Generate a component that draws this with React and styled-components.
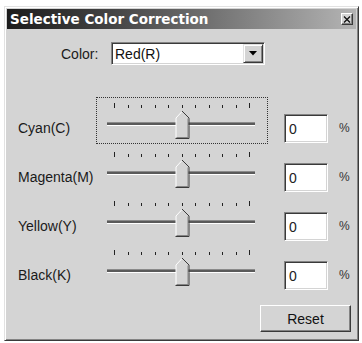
import styled, { createGlobalStyle } from 'styled-components';

const GlobalStyle = createGlobalStyle`
  body {
    margin: 0;
    background: #ffffff;
    font-family: "Liberation Sans", Arial, sans-serif;
  }
`;

const Page = styled.div`
  padding: 6px 0 0 4px;
`;

const Window = styled.div`
  width: 355px;
  height: 335px;
  box-sizing: border-box;
  background: #d4d4d4;
  border: 1px solid;
  border-color: #e2e2e2 #3a3a3a #3a3a3a #e2e2e2;
  box-shadow: inset 1px 1px 0 #ffffff, inset -1px -1px 0 #848484;
  padding: 2px;
  display: flex;
  flex-direction: column;
`;

const TitleBar = styled.div`
  height: 20px;
  display: flex;
  align-items: center;
  padding: 0 3px 0 3px;
  background: linear-gradient(to right, #1c1c1c 0%, #444444 30%, #b4b4b4 100%);
`;

const TitleText = styled.span`
  flex: 1;
  color: #ffffff;
  font-family: "DejaVu Sans", Verdana, sans-serif;
  font-weight: bold;
  font-size: 13.5px;
  white-space: nowrap;
`;

const CloseButton = styled.div`
  width: 12px;
  height: 12px;
  box-sizing: border-box;
  background: #d4d4d4;
  border: 1px solid;
  border-color: #ffffff #3a3a3a #3a3a3a #ffffff;
  box-shadow: inset -1px -1px 0 #848484;
  display: flex;
  align-items: center;
  justify-content: center;
`;

const ColorRow = styled.div`
  display: flex;
  align-items: center;
  margin-top: 13px;
  padding-left: 54px;
  height: 23px;
`;

const Label = styled.span`
  font-size: 14px;
  color: #1a1a1a;
  white-space: nowrap;
`;

const ColorLabel = styled(Label)`
  width: 50px;
`;

const Select = styled.div`
  width: 154px;
  height: 23px;
  box-sizing: border-box;
  background: #ffffff;
  border: 1px solid;
  border-color: #848484 #ffffff #ffffff #848484;
  box-shadow: inset 1px 1px 0 #3a3a3a, inset -1px -1px 0 #d4d4d4;
  padding: 1px 1px 1px 2px;
  display: flex;
  align-items: center;
`;

const SelectText = styled.span`
  flex: 1;
  padding-left: 1px;
  font-size: 14px;
  color: #111;
`;

const ArrowButton = styled.div`
  width: 20px;
  height: 19px;
  box-sizing: border-box;
  background: #d4d4d4;
  border: 1px solid;
  border-color: #e2e2e2 #3a3a3a #3a3a3a #e2e2e2;
  box-shadow: inset 1px 1px 0 #ffffff, inset -1px -1px 0 #848484;
  display: flex;
  align-items: center;
  justify-content: center;
`;

const Sliders = styled.div`
  margin-top: 31px;
  padding-left: 11px;
  display: flex;
  flex-direction: column;
`;

const Row = styled.div`
  display: flex;
  align-items: flex-start;
  height: 49px;
`;

const RowLabel = styled(Label)`
  width: 78px;
  margin-top: 24px;
  line-height: 16px;
`;

const SliderBox = styled.div`
  position: relative;
  width: 172px;
  height: 47px;
  margin-top: 1px;
  box-sizing: border-box;
  border: 1px dotted ${(p) => (p.$focused ? '#333333' : 'transparent')};
`;

const Ticks = styled.div`
  display: flex;
  justify-content: space-between;
  align-items: flex-end;
  width: 136px;
  height: 5px;
  margin: 5px 0 0 17px;
`;

const Tick = styled.span`
  width: 1px;
  height: ${(p) => (p.$long ? 5 : 3)}px;
  background: #222222;
`;

const Track = styled.div`
  width: 148px;
  height: 2px;
  margin: 14px 0 0 10px;
  background: #5a5a5a;
  border-top: 1px solid #8a8a8a;
  border-bottom: 1px solid #ffffff;
`;

const Thumb = styled.svg`
  position: absolute;
  left: 78px;
  top: 12px;
`;

const NumberBox = styled.div`
  width: 44px;
  height: 29px;
  margin: 18px 0 0 16px;
  box-sizing: border-box;
  background: #ffffff;
  border: 1px solid;
  border-color: #848484 #ffffff #ffffff #848484;
  box-shadow: inset 1px 1px 0 #3a3a3a, inset -1px -1px 0 #d4d4d4;
  padding: 6px 0 0 4px;
  font-size: 14px;
  line-height: 16px;
  color: #222;
`;

const Percent = styled.span`
  margin: 25px 0 0 11px;
  font-size: 12px;
  color: #333;
`;

const Footer = styled.div`
  display: flex;
  justify-content: flex-end;
  margin-top: 13px;
  padding-right: 5px;
`;

const Button = styled.div`
  width: 91px;
  height: 27px;
  box-sizing: border-box;
  background: #d4d4d4;
  border: 1px solid;
  border-color: #ffffff #3a3a3a #3a3a3a #ffffff;
  box-shadow: inset -1px -1px 0 #848484;
  display: flex;
  align-items: center;
  justify-content: center;
  font-size: 14px;
  color: #111;
`;

const channels = ['Cyan(C)', 'Magenta(M)', 'Yellow(Y)', 'Black(K)'];

const SliderThumb = () => (
  <Thumb width="15" height="29" viewBox="0 0 15 29">
    <polygon points="1,8 7,1.5 13,8 13,28 1,28" fill="#d4d4d4" />
    <polyline points="1,27.5 1,8 7,1.5" fill="none" stroke="#ffffff" strokeWidth="1" />
    <polyline points="7,1 14,8 14,28.5 0.5,28.5" fill="none" stroke="#3a3a3a" strokeWidth="1" />
    <polyline points="13,8.5 13,27.5 1.5,27.5" fill="none" stroke="#848484" strokeWidth="1" />
  </Thumb>
);

const Slider = ({ focused }) => (
  <SliderBox $focused={focused}>
    <Ticks>
      {Array.from({ length: 11 }).map((_, i) => (
        <Tick key={i} $long={i === 0 || i === 10} />
      ))}
    </Ticks>
    <Track />
    <SliderThumb />
  </SliderBox>
);

export default function App() {
  return (
    <Page>
      <GlobalStyle />
      <Window>
        <TitleBar>
          <TitleText>Selective Color Correction</TitleText>
          <CloseButton>
            <svg width="8" height="7" viewBox="0 0 8 7">
              <path d="M1 0.5 L7 6.5 M7 0.5 L1 6.5" stroke="#111" strokeWidth="1.3" />
            </svg>
          </CloseButton>
        </TitleBar>

        <ColorRow>
          <ColorLabel>Color:</ColorLabel>
          <Select>
            <SelectText>Red(R)</SelectText>
            <ArrowButton>
              <svg width="8" height="5" viewBox="0 0 8 5">
                <polygon points="0,0 8,0 4,4.5" fill="#000" />
              </svg>
            </ArrowButton>
          </Select>
        </ColorRow>

        <Sliders>
          {channels.map((name, i) => (
            <Row key={name}>
              <RowLabel>{name}</RowLabel>
              <Slider focused={i === 0} />
              <NumberBox>0</NumberBox>
              <Percent>%</Percent>
            </Row>
          ))}
        </Sliders>

        <Footer>
          <Button>Reset</Button>
        </Footer>
      </Window>
    </Page>
  );
}
